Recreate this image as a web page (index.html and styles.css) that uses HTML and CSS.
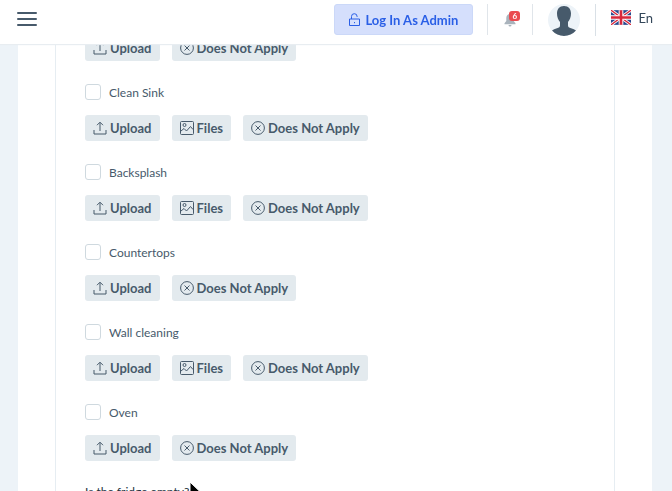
FILE: index.html
```html
<!DOCTYPE html>
<html lang="en">
<head>
    <meta charset="UTF-8">
    <meta name="viewport" content="width=device-width, initial-scale=1.0">
    <title>Kitchen checklist</title>
    <link rel="stylesheet" href="styles.css">
</head>
<body>
    <!-- shared icons -->
    <svg class="sprite" aria-hidden="true">
        <symbol id="icon-upload" viewBox="0 0 14 14">
            <path d="M1 9v4h12V9M7 10V1.5M4 4.2l3-3 3 3"/>
        </symbol>
        <symbol id="icon-files" viewBox="0 0 14 14">
            <rect x="0.5" y="0.5" width="13" height="13" rx="1"/>
            <circle cx="4.5" cy="4" r="1.5"/>
            <path d="M1 10l3-2.500 2.500 2.500 4-4.500L13 8.500"/>
        </symbol>
        <symbol id="icon-cancel" viewBox="0 0 14 14">
            <circle cx="7" cy="7" r="6.4"/>
            <path d="M4.500 4.500l5 5M9.500 4.500l-5 5"/>
        </symbol>
    </svg>

    <header class="topbar">
        <button class="menu-btn" type="button" aria-label="Menu">
            <span></span>
            <span></span>
            <span></span>
        </button>
        <div class="topbar-right">
            <button class="admin-btn" type="button">
                <svg class="lock" viewBox="0 0 11 13" aria-hidden="true">
                    <path d="M.5 6h10v6.500H.5zM2.500 6V3.500a2.800 2.800 0 0 1 5.600 0V4M5.500 9v1.200"/>
                </svg>
                Log In As Admin
            </button>
            <div class="notify-wrap">
                <button class="notify" type="button" aria-label="Notifications">
                    <svg viewBox="0 0 12 14" aria-hidden="true">
                        <path d="M6 1C3.5 1 2.3 3 2.3 5v3L.5 10.3v.9h11v-.9L9.7 8V5C9.7 3 8.500 1 6 1zM4.500 12h3a1.500 1.500 0 0 1-3 0z"/>
                    </svg>
                    <span class="badge">6</span>
                </button>
            </div>
            <a class="avatar" href="#" aria-label="Profile">
                <svg viewBox="0 0 32 32" aria-hidden="true">
                    <circle cx="16" cy="16" r="16" fill="#edf3f8"/>
                    <path d="M16 2c4.600 0 7 3 7 7.500 0 3.500-1.200 6.500-3 8.500v3.500c0 1.500 1 2 3 2.700 2 .7 4 1.500 5 2.300A16 16 0 0 1 4 26.500c1-.8 3-1.600 5-2.300 2-.7 3-1.200 3-2.700V18c-1.800-2-3-5-3-8.500C9 5 11.400 2 16 2z" fill="#475a6b"/>
                </svg>
            </a>
            <a class="lang" href="#">
                <svg viewBox="0 0 60 44" aria-hidden="true">
                    <path fill="#27488f" d="M0 0h60v44H0z"/>
                    <path stroke="#fff" stroke-width="9" d="M0 0l60 44M60 0L0 44"/>
                    <path stroke="#d8283c" stroke-width="4" d="M0 0l60 44M60 0L0 44"/>
                    <path stroke="#fff" stroke-width="14" d="M30 0v44M0 22h60"/>
                    <path stroke="#d8283c" stroke-width="8" d="M30 0v44M0 22h60"/>
                </svg>
                En
            </a>
        </div>
    </header>

    <main class="page">
        <div class="card">
            <section class="item">
                <div class="actions">
                    <button class="btn" type="button"><svg><use href="#icon-upload"/></svg>Upload</button>
                    <button class="btn" type="button"><svg><use href="#icon-cancel"/></svg>Does Not Apply</button>
                </div>
            </section>
            <section class="item">
                <label class="check"><input type="checkbox">Clean Sink</label>
                <div class="actions">
                    <button class="btn" type="button"><svg><use href="#icon-upload"/></svg>Upload</button>
                    <button class="btn" type="button"><svg><use href="#icon-files"/></svg>Files</button>
                    <button class="btn" type="button"><svg><use href="#icon-cancel"/></svg>Does Not Apply</button>
                </div>
            </section>
            <section class="item">
                <label class="check"><input type="checkbox">Backsplash</label>
                <div class="actions">
                    <button class="btn" type="button"><svg><use href="#icon-upload"/></svg>Upload</button>
                    <button class="btn" type="button"><svg><use href="#icon-files"/></svg>Files</button>
                    <button class="btn" type="button"><svg><use href="#icon-cancel"/></svg>Does Not Apply</button>
                </div>
            </section>
            <section class="item">
                <label class="check"><input type="checkbox">Countertops</label>
                <div class="actions">
                    <button class="btn" type="button"><svg><use href="#icon-upload"/></svg>Upload</button>
                    <button class="btn" type="button"><svg><use href="#icon-cancel"/></svg>Does Not Apply</button>
                </div>
            </section>
            <section class="item">
                <label class="check"><input type="checkbox">Wall cleaning</label>
                <div class="actions">
                    <button class="btn" type="button"><svg><use href="#icon-upload"/></svg>Upload</button>
                    <button class="btn" type="button"><svg><use href="#icon-files"/></svg>Files</button>
                    <button class="btn" type="button"><svg><use href="#icon-cancel"/></svg>Does Not Apply</button>
                </div>
            </section>
            <section class="item">
                <label class="check"><input type="checkbox">Oven</label>
                <div class="actions">
                    <button class="btn" type="button"><svg><use href="#icon-upload"/></svg>Upload</button>
                    <button class="btn" type="button"><svg><use href="#icon-cancel"/></svg>Does Not Apply</button>
                </div>
            </section>
            <p class="question">Is the fridge empty?
                <svg class="pointer" viewBox="0 0 14 22" aria-hidden="true">
                    <path d="M1 1v17l4-4 3 7 3-1.500-3-6.500h5.500z"/>
                </svg>
            </p>
        </div>
    </main>
</body>
</html>
```
FILE: styles.css
```css
* {
    margin: 0;
    padding: 0;
    box-sizing: border-box;
}

body {
    height: 100vh;
    overflow: hidden;
    background: #edf3f8;
    color: #475a6b;
    font-family: Lato, "Liberation Sans", sans-serif;
    font-size: 12px;
}

button {
    border: none;
    background: none;
    color: inherit;
    font-family: inherit;
    cursor: pointer;
}

a {
    color: inherit;
    text-decoration: none;
}

.sprite {
    position: absolute;
    width: 0;
    height: 0;
}

/* top bar */
.topbar {
    position: fixed;
    top: 0;
    left: 0;
    right: 0;
    z-index: 10;
    display: flex;
    justify-content: space-between;
    height: 44px;
    padding: 0 19px 0 17px;
    background: #fff;
    box-shadow: 0 1px 1px #e8edf1;
}

.menu-btn {
    display: flex;
    flex-direction: column;
    gap: 4px;
    width: 20px;
    height: 15px;
    margin-top: 12px;
}

.menu-btn span {
    width: 100%;
    height: 2px;
    flex: none;
    border-radius: 1px;
    background: #475a6b;
}

.topbar-right {
    display: flex;
    align-items: flex-start;
    padding-top: 4px;
}

.admin-btn {
    display: flex;
    align-items: center;
    justify-content: center;
    gap: 5px;
    width: 139px;
    height: 31px;
    margin-right: 14px;
    border: 1px solid #cbd8f8;
    border-radius: 3px;
    background: #d5dffc;
    color: #2a5fe6;
    font-size: 13px;
    font-weight: 700;
}

.lock {
    width: 11px;
    height: 13px;
    fill: none;
    stroke: #2a5fe6;
}

.notify-wrap {
    display: flex;
    justify-content: center;
    width: 46px;
    height: 31px;
    border-left: 1px solid #e0e5ea;
    border-right: 1px solid #e0e5ea;
}

.notify {
    position: relative;
    width: 12px;
    height: 14px;
    margin-top: 9px;
}

.notify svg {
    display: block;
    width: 12px;
    height: 14px;
    fill: #a9b3bc;
}

.badge {
    position: absolute;
    top: -2px;
    left: 5px;
    width: 11px;
    height: 10px;
    border-radius: 3px;
    background: #ea4b50;
    color: #fff;
    font-size: 8px;
    font-weight: 700;
    line-height: 10px;
    text-align: center;
}

.avatar {
    height: 32px;
    padding: 0 15px;
    border-right: 1px solid #d9e0e6;
}

.avatar svg {
    display: block;
    width: 32px;
    height: 32px;
}

.lang {
    display: flex;
    align-items: center;
    gap: 7px;
    height: 27px;
    padding-left: 15px;
    color: #34475a;
    font-size: 13px;
}

.lang svg {
    width: 20px;
    height: 15px;
}

/* checklist */
.page {
    margin: 0 20px 0 18px;
    padding: 0 37px;
    background: #fff;
}

.card {
    padding: 35px 29px;
    border-left: 1px solid #e6edf2;
    border-right: 1px solid #e6edf2;
}

.item {
    display: flex;
    flex-direction: column;
    gap: 15px;
    margin-bottom: 23px;
}

.check {
    display: flex;
    align-items: center;
    align-self: flex-start;
    gap: 8px;
    height: 16px;
    cursor: pointer;
}

.check input {
    appearance: none;
    width: 16px;
    height: 16px;
    border: 1px solid #cfd9df;
    border-radius: 3px;
    background: #fff;
}

.check input:checked {
    background: #2a5fe6;
}

.actions {
    display: flex;
    gap: 12px;
}

.btn {
    display: flex;
    align-items: center;
    gap: 3px;
    height: 26px;
    padding: 0 8px;
    border-radius: 3px;
    background: #e3eaee;
    font-size: 13px;
    font-weight: 700;
}

.btn svg {
    width: 14px;
    height: 14px;
    fill: none;
    stroke: #475a6b;
    stroke-width: 1;
}

.question {
    position: relative;
    width: max-content;
    color: #26333f;
    font-size: 12px;
}

.pointer {
    position: absolute;
    top: -3px;
    left: 104px;
    width: 14px;
    height: 22px;
    stroke: #fff;
    stroke-width: 1;
}
```
